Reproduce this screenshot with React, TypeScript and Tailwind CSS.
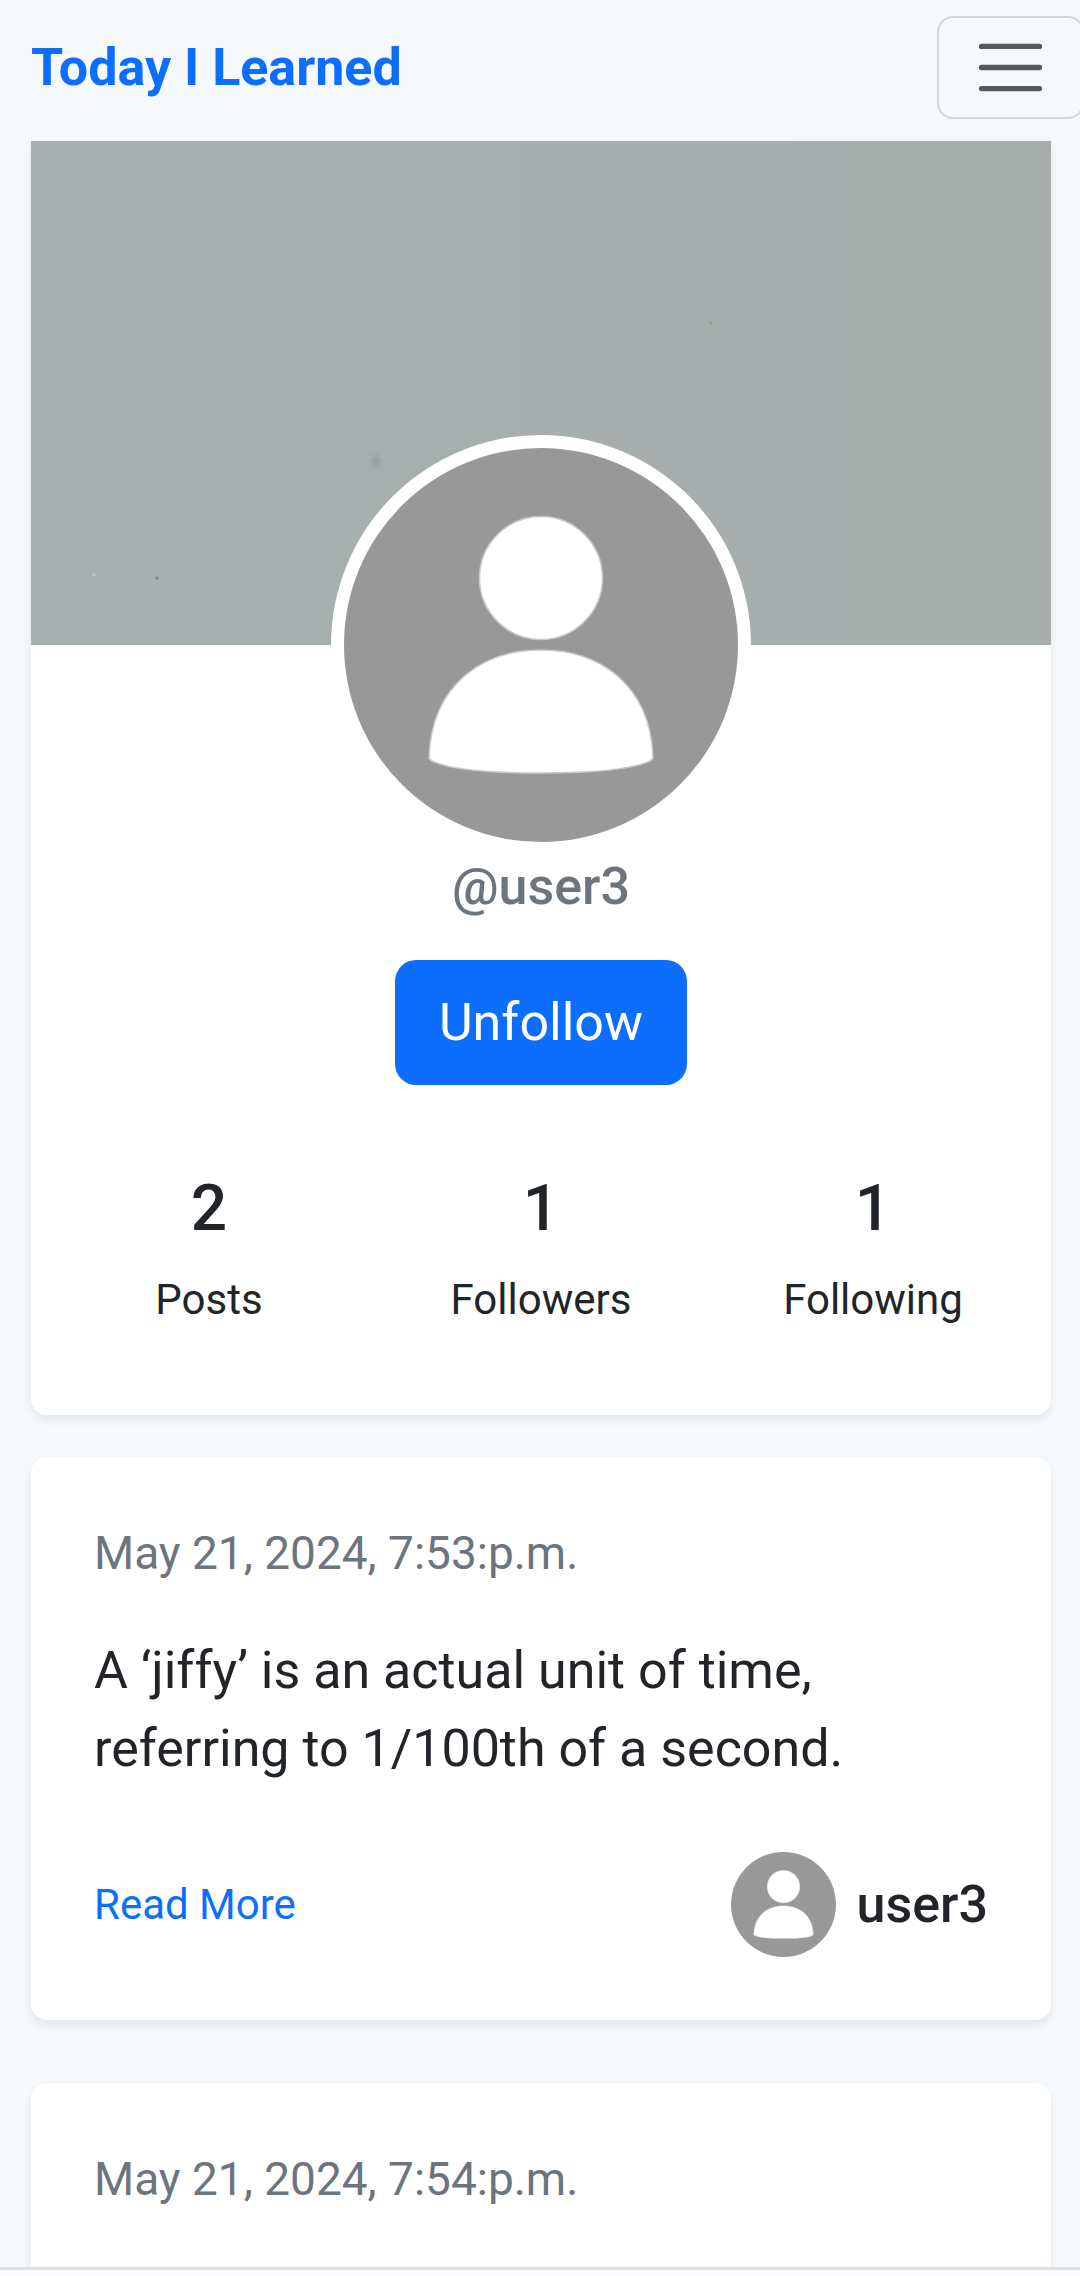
import React from "react";

type Post = { date: string; text?: string; author: string };

const posts: Post[] = [
  {
    date: "May 21, 2024, 7:53:p.m.",
    text: "A ‘jiffy’ is an actual unit of time, referring to 1/100th of a second.",
    author: "user3",
  },
  { date: "May 21, 2024, 7:54:p.m.", author: "user3" },
];

const stats = [
  { value: 2, label: "Posts" },
  { value: 1, label: "Followers" },
  { value: 1, label: "Following" },
];

const cardShadow = "shadow-[0_5px_10px_rgba(0,0,0,0.075)]";

function Avatar({ className }: { className: string }) {
  return (
    <svg viewBox="0 0 394 394" className={className} role="img" aria-label="Profile picture">
      <circle cx="197" cy="197" r="197" fill="#989898" />
      <g fill="#ffffff" stroke="#c9c9c9" strokeWidth="1.5">
        <circle cx="197" cy="130" r="61.5" />
        <path d="M85 309 C88 235 140 202 197 202 S306 235 309 309 C309 311 308 312 306 313 C285 323 240 325 197 325 S109 323 88 313 C86 312 85 311 85 309 Z" />
      </g>
    </svg>
  );
}

function Header() {
  return (
    <header className="flex items-start justify-between pt-4 pb-[22px] pl-[31px]">
      <a href="#" className="mt-[13px] text-[52px] leading-[78px] font-bold text-[#0d6efd]">
        Today I Learned
      </a>
      <button
        type="button"
        aria-label="Toggle navigation"
        className="-mr-1 flex h-[103px] w-[147px] shrink-0 items-center justify-center rounded-2xl border-2 border-[#d3d6d9]"
      >
        <svg viewBox="0 0 30 30" className="size-[79px]" fill="none" stroke="#565859" strokeWidth="2" strokeLinecap="round">
          <path d="M4 7h22M4 15h22M4 23h22" />
        </svg>
      </button>
    </header>
  );
}

function Cover() {
  return (
    <svg
      className="block h-[504px] w-full bg-linear-to-r from-[#a8afb0] to-[#a7adab]"
      preserveAspectRatio="none"
      viewBox="0 0 1020 504"
      aria-hidden="true"
    >
      <defs>
        <radialGradient id="spot">
          <stop offset="0" stopColor="#979e9d" />
          <stop offset="1" stopColor="#979e9d" stopOpacity="0" />
        </radialGradient>
      </defs>
      <circle cx="345" cy="320" r="9" fill="url(#spot)" />
      <circle cx="126" cy="437" r="1.5" fill="#858786" />
      <circle cx="63" cy="434" r="1.5" fill="#c3c8c6" />
      <circle cx="680" cy="182" r="1.5" fill="#959b9a" />
    </svg>
  );
}

function Profile() {
  return (
    <section className={`overflow-hidden rounded-b-2xl bg-white ${cardShadow}`}>
      <Cover />
      <div className="flex flex-col items-center px-3 pb-[84px]">
        <div className="relative -mt-[210px] size-[420px] rounded-full bg-white p-[13px]">
          <Avatar className="block size-full" />
        </div>
        <h1 className="text-[52px] leading-[64px] font-medium text-[#6c757d]">@user3</h1>
        <button
          type="button"
          className="mt-[41px] rounded-[21px] bg-[#0d6efd] px-11 py-6 text-[52px] leading-[77px] text-white"
        >
          Unfollow
        </button>
        <dl className="mt-[86px] grid w-full grid-cols-3 text-center text-[#212529]">
          {stats.map((s) => (
            <div key={s.label} className="flex flex-col-reverse gap-[21px]">
              <dt className="text-[42px] leading-[63px]">{s.label}</dt>
              <dd className="text-[64px] leading-[76px] font-medium">{s.value}</dd>
            </div>
          ))}
        </dl>
      </div>
    </section>
  );
}

function PostCard({ post }: { post: Post }) {
  return (
    <article className={`rounded-2xl bg-white p-[63px] ${cardShadow}`}>
      <time className="block text-[46px] leading-[66px] text-[#6c757d]">{post.date}</time>
      <p className="mt-[46px] min-h-[156px] text-[52px] leading-[78px] text-[#212529]">{post.text}</p>
      {post.text && (
        <div className="mt-16 flex items-center justify-between">
          <a href="#" className="text-[42px] leading-[63px] text-[#0d6efd]">
            Read More
          </a>
          <a href="#" className="flex items-center gap-[21px] text-[52px] leading-[78px] font-medium text-[#212529]">
            <Avatar className="size-[105px]" />
            {post.author}
          </a>
        </div>
      )}
    </article>
  );
}

export default function App() {
  return (
    <div className="flex h-screen flex-col bg-[#f5f9fc] font-['Roboto',sans-serif]">
      <div className="min-h-0 flex-1 overflow-hidden">
        <Header />
        <main className="pr-[29px] pl-[31px]">
          <Profile />
          <div className="mt-[42px] flex flex-col gap-[63px]">
            {posts.map((p) => (
              <PostCard key={p.date} post={p} />
            ))}
          </div>
        </main>
      </div>
      <div className="h-[9px] shrink-0 border-t-3 border-[#dfdfe8] bg-[#fafaff]" />
    </div>
  );
}
